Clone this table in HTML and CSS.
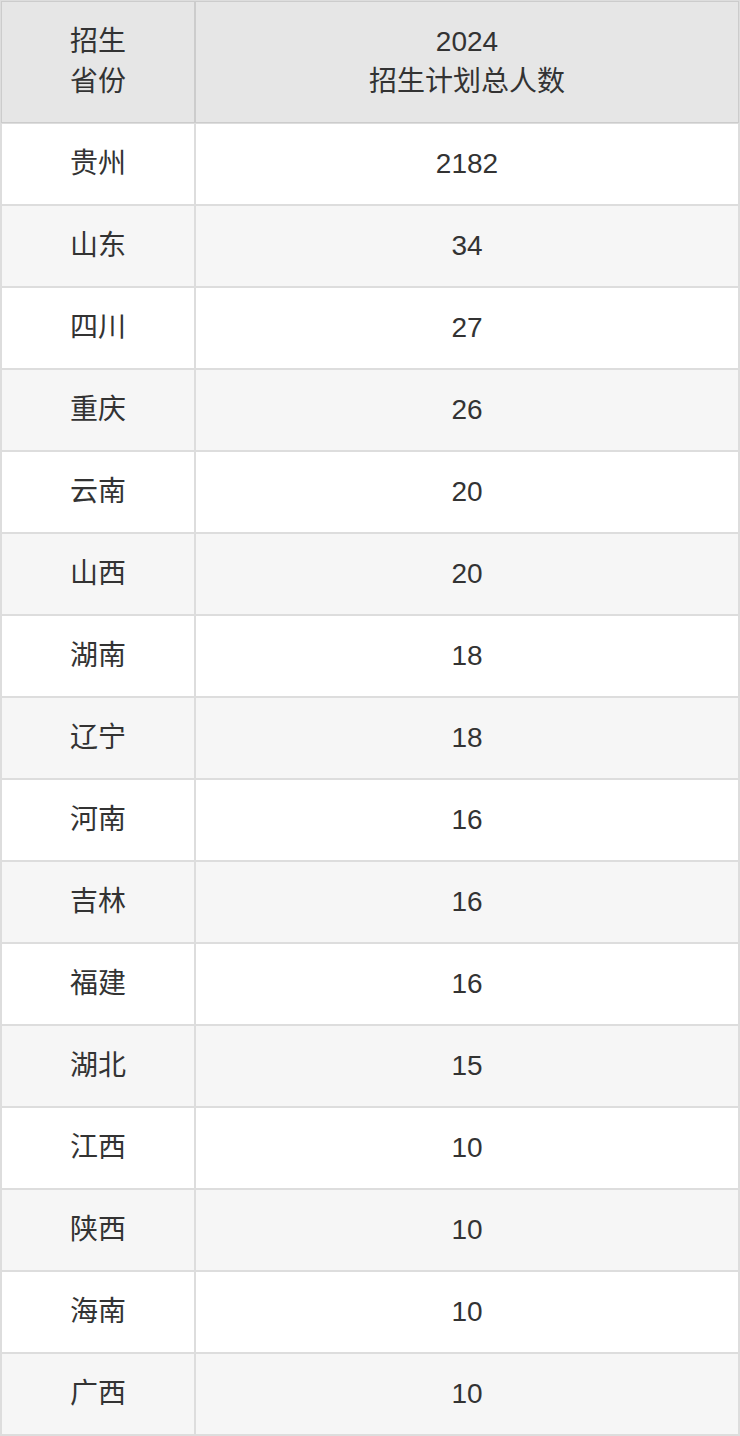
FILE: index.html
```html
<!DOCTYPE html>
<html lang="zh-CN">
<head>
<meta charset="utf-8">
<title>招生计划</title>
<link rel="stylesheet" href="styles.css">
</head>
<body>
<table class="plan">
  <thead>
    <tr>
      <th class="col-prov">招生<br>省份</th>
      <th class="col-num">2024<br>招生计划总人数</th>
    </tr>
  </thead>
  <tbody>
    <tr><td>贵州</td><td>2182</td></tr>
    <tr><td>山东</td><td>34</td></tr>
    <tr><td>四川</td><td>27</td></tr>
    <tr><td>重庆</td><td>26</td></tr>
    <tr><td>云南</td><td>20</td></tr>
    <tr><td>山西</td><td>20</td></tr>
    <tr><td>湖南</td><td>18</td></tr>
    <tr><td>辽宁</td><td>18</td></tr>
    <tr><td>河南</td><td>16</td></tr>
    <tr><td>吉林</td><td>16</td></tr>
    <tr><td>福建</td><td>16</td></tr>
    <tr><td>湖北</td><td>15</td></tr>
    <tr><td>江西</td><td>10</td></tr>
    <tr><td>陕西</td><td>10</td></tr>
    <tr><td>海南</td><td>10</td></tr>
    <tr><td>广西</td><td>10</td></tr>
  </tbody>
</table>
</body>
</html>
```
FILE: styles.css
```css
html, body {
  margin: 0;
  padding: 0;
  background: #ffffff;
}

.plan {
  width: 740px;
  border-collapse: separate;
  border-spacing: 0;
  border: 1px solid #dddddd;
  font-family: "Liberation Sans", Arial, "Noto Sans CJK SC", sans-serif;
  font-size: 28px;
  line-height: 40px;
  color: #333333;
  table-layout: fixed;
}

.plan th,
.plan td {
  text-align: center;
  vertical-align: middle;
  padding: 0;
  font-weight: normal;
}

.plan th {
  height: 120px;
  background: #e6e6e6;
  border: 1px solid #cccccc;
}

.plan td {
  height: 80px;
  border: 1px solid #dddddd;
}

.col-prov {
  width: 192px;
}

.plan tbody tr:nth-child(even) td {
  background: #f6f6f6;
}
```
